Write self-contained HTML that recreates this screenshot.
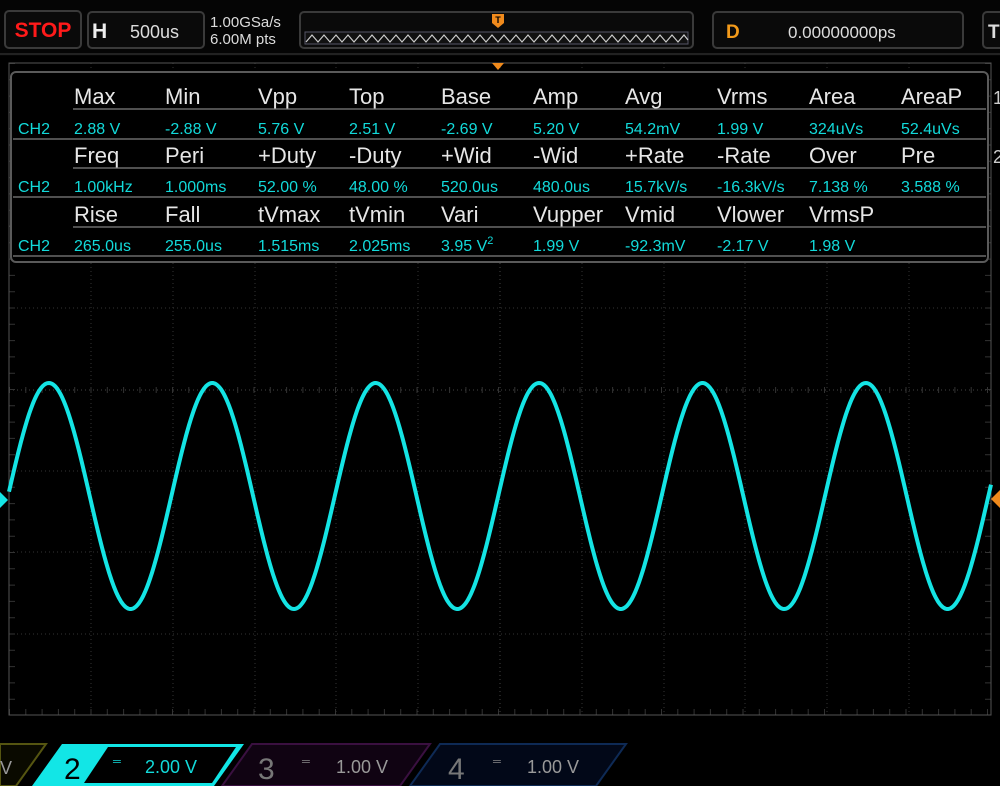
<!DOCTYPE html>
<html><head><style>
body{margin:0;background:#000;width:1000px;height:786px;overflow:hidden;font-family:"Liberation Sans",sans-serif}
svg{display:block}
</style></head><body>
<svg width="1000" height="786" xmlns="http://www.w3.org/2000/svg" font-family="Liberation Sans, sans-serif">
<rect width="1000" height="786" fill="#000"/>
<!-- top bar -->
<rect x="0" y="0" width="1000" height="56" fill="#050505"/>
<line x1="0" y1="54" x2="1000" y2="54" stroke="#222" stroke-width="2"/>
<rect x="5" y="11" width="76" height="37" rx="4" fill="#0a0a0a" stroke="#3a3a3a" stroke-width="2"/>
<text x="43" y="37" fill="#ff1a1a" font-size="21" font-weight="bold" text-anchor="middle">STOP</text>
<rect x="88" y="12" width="116" height="36" rx="4" fill="#0a0a0a" stroke="#3a3a3a" stroke-width="2"/>
<text x="92" y="38" fill="#eee" font-size="21" font-weight="bold">H</text>
<text x="130" y="38" fill="#ddd" font-size="18">500us</text>
<text x="210" y="27" fill="#ddd" font-size="15">1.00GSa/s</text>
<text x="210" y="44" fill="#ddd" font-size="15">6.00M pts</text>
<rect x="300" y="12" width="393" height="36" rx="4" fill="#0a0a0a" stroke="#3a3a3a" stroke-width="2"/>
<rect x="305" y="32" width="383" height="12" fill="#111" stroke="#556" stroke-width="1"/>
<polyline fill="none" stroke="#ccc" stroke-width="1.2" points="306,42 312,35 318,42 324,35 330,42 336,35 342,42 348,35 354,42 360,35 366,42 372,35 378,42 384,35 390,42 396,35 402,42 408,35 414,42 420,35 426,42 432,35 438,42 444,35 450,42 456,35 462,42 468,35 474,42 480,35 486,42 492,35 498,42 504,35 510,42 516,35 522,42 528,35 534,42 540,35 546,42 552,35 558,42 564,35 570,42 576,35 582,42 588,35 594,42 600,35 606,42 612,35 618,42 624,35 630,42 636,35 642,42 648,35 654,42 660,35 666,42 672,35 678,42 684,35 688,40"/>
<path d="M492 14h12v9l-6 5l-6-5z" fill="#f08a1c"/>
<text x="498" y="23" fill="#000" font-size="9" font-weight="bold" text-anchor="middle">T</text>
<rect x="713" y="12" width="250" height="36" rx="4" fill="#0a0a0a" stroke="#3a3a3a" stroke-width="2"/>
<text x="726" y="38" fill="#f39a1a" font-size="19" font-weight="bold">D</text>
<text x="788" y="38" fill="#ddd" font-size="17">0.00000000ps</text>
<rect x="983" y="12" width="30" height="36" rx="4" fill="#0a0a0a" stroke="#3a3a3a" stroke-width="2"/>
<text x="988" y="38" fill="#ddd" font-size="19" font-weight="bold">T</text>
<!-- grid -->
<g stroke="#333" stroke-width="1" stroke-dasharray="1,3">
<line x1="91" y1="63" x2="91" y2="715"/><line x1="173" y1="63" x2="173" y2="715"/><line x1="255" y1="63" x2="255" y2="715"/><line x1="336" y1="63" x2="336" y2="715"/><line x1="418" y1="63" x2="418" y2="715"/><line x1="582" y1="63" x2="582" y2="715"/><line x1="664" y1="63" x2="664" y2="715"/><line x1="745" y1="63" x2="745" y2="715"/><line x1="827" y1="63" x2="827" y2="715"/><line x1="909" y1="63" x2="909" y2="715"/>
<line x1="9" y1="145" x2="991" y2="145"/><line x1="9" y1="226" x2="991" y2="226"/><line x1="9" y1="308" x2="991" y2="308"/><line x1="9" y1="471" x2="991" y2="471"/><line x1="9" y1="552" x2="991" y2="552"/><line x1="9" y1="634" x2="991" y2="634"/>
</g>
<g stroke="#444" stroke-width="1">
<line x1="500" y1="63" x2="500" y2="715" stroke-dasharray="1,3"/>
<line x1="9" y1="390" x2="991" y2="390" stroke-dasharray="1,3"/>
<line x1="9" y1="390" x2="991" y2="390" stroke-dasharray="1,15.3" stroke-width="6" stroke="#333"/>
<line x1="9" y1="712" x2="991" y2="712" stroke-dasharray="1,15.3" stroke-width="6" stroke="#333"/>
<line x1="12" y1="63" x2="12" y2="715" stroke-dasharray="1,15.3" stroke-width="6" stroke="#333"/>
<line x1="988" y1="63" x2="988" y2="715" stroke-dasharray="1,15.3" stroke-width="6" stroke="#333"/>
<rect x="9" y="63" width="982" height="652" fill="none" stroke="#555"/>
</g>
<path d="M492 63h12l-6 7z" fill="#f08a1c"/>
<!-- measurement panel -->
<rect x="11" y="72" width="977" height="190" rx="5" fill="#000" stroke="#5a5a5a" stroke-width="2"/>
<g stroke="#6a6a6a" stroke-width="1.5">
<line x1="73" y1="109" x2="986" y2="109"/><line x1="13" y1="139" x2="986" y2="139"/>
<line x1="73" y1="168" x2="986" y2="168"/><line x1="13" y1="197" x2="986" y2="197"/>
<line x1="73" y1="227" x2="986" y2="227"/><line x1="13" y1="256" x2="986" y2="256"/>
</g>
<g fill="#e6e6e6" font-size="22">
<text x="74" y="104">Max</text><text x="165" y="104">Min</text><text x="258" y="104">Vpp</text><text x="349" y="104">Top</text><text x="441" y="104">Base</text><text x="533" y="104">Amp</text><text x="625" y="104">Avg</text><text x="717" y="104">Vrms</text><text x="809" y="104">Area</text><text x="901" y="104">AreaP</text>
<text x="74" y="163">Freq</text><text x="165" y="163">Peri</text><text x="258" y="163">+Duty</text><text x="349" y="163">-Duty</text><text x="441" y="163">+Wid</text><text x="533" y="163">-Wid</text><text x="625" y="163">+Rate</text><text x="717" y="163">-Rate</text><text x="809" y="163">Over</text><text x="901" y="163">Pre</text>
<text x="74" y="222">Rise</text><text x="165" y="222">Fall</text><text x="258" y="222">tVmax</text><text x="349" y="222">tVmin</text><text x="441" y="222">Vari</text><text x="533" y="222">Vupper</text><text x="625" y="222">Vmid</text><text x="717" y="222">Vlower</text><text x="809" y="222">VrmsP</text>
</g>
<g fill="#12dada" font-size="16">
<text x="18" y="134">CH2</text><text x="74" y="134">2.88 V</text><text x="165" y="134">-2.88 V</text><text x="258" y="134">5.76 V</text><text x="349" y="134">2.51 V</text><text x="441" y="134">-2.69 V</text><text x="533" y="134">5.20 V</text><text x="625" y="134">54.2mV</text><text x="717" y="134">1.99 V</text><text x="809" y="134">324uVs</text><text x="901" y="134">52.4uVs</text>
<text x="18" y="192">CH2</text><text x="74" y="192">1.00kHz</text><text x="165" y="192">1.000ms</text><text x="258" y="192">52.00 %</text><text x="349" y="192">48.00 %</text><text x="441" y="192">520.0us</text><text x="533" y="192">480.0us</text><text x="625" y="192">15.7kV/s</text><text x="717" y="192">-16.3kV/s</text><text x="809" y="192">7.138 %</text><text x="901" y="192">3.588 %</text>
<text x="18" y="251">CH2</text><text x="74" y="251">265.0us</text><text x="165" y="251">255.0us</text><text x="258" y="251">1.515ms</text><text x="349" y="251">2.025ms</text><text x="441" y="251">3.95 V<tspan font-size="11" dy="-7">2</tspan></text><text x="533" y="251">1.99 V</text><text x="625" y="251">-92.3mV</text><text x="717" y="251">-2.17 V</text><text x="809" y="251">1.98 V</text>
</g>
<text x="993" y="104" fill="#ccc" font-size="18">1</text>
<text x="993" y="163" fill="#ccc" font-size="18">2</text>
<!-- waveform -->
<path id="w" fill="none" stroke="#14e4e4" stroke-width="4" d=""/>
<path d="M0 492l8 8l-8 8z" fill="#14e4e4"/>
<path d="M1000 490l-9 9l9 9z" fill="#f08a1c"/>
<!-- bottom tabs -->
<path d="M0 744h46l-30 42h-16z" fill="#0a0a00" stroke="#555511" stroke-width="2"/>
<text x="0" y="774" fill="#999" font-size="18">V</text>
<path d="M62 744h182l-30 42h-182z" fill="#12e6e6"/>
<text x="64" y="779" fill="#000" font-size="30">2</text>
<path d="M108 747h128l-24 36h-128z" fill="#000"/>
<text x="113" y="765" fill="#12dada" font-size="11">═</text>
<text x="145" y="773" fill="#12dada" font-size="18">2.00 V</text>
<path d="M252 744h178l-30 42h-178z" fill="#100312" stroke="#3a1040" stroke-width="2"/>
<text x="258" y="779" fill="#777" font-size="30">3</text>
<text x="302" y="765" fill="#888" font-size="11">═</text>
<text x="336" y="773" fill="#999" font-size="18">1.00 V</text>
<path d="M440 744h186l-30 42h-186z" fill="#020818" stroke="#0e2a55" stroke-width="2"/>
<text x="448" y="779" fill="#777" font-size="30">4</text>
<text x="493" y="765" fill="#888" font-size="11">═</text>
<text x="527" y="773" fill="#999" font-size="18">1.00 V</text>
</svg>
<script>
var d="";for(var x=9;x<=991;x+=1){var y=496-113*Math.sin(2*Math.PI*(x-8)/163.4);d+=(x==9?"M":"L")+x+" "+y.toFixed(1)+" ";}
document.getElementById("w").setAttribute("d",d);
</script>
</body></html>
